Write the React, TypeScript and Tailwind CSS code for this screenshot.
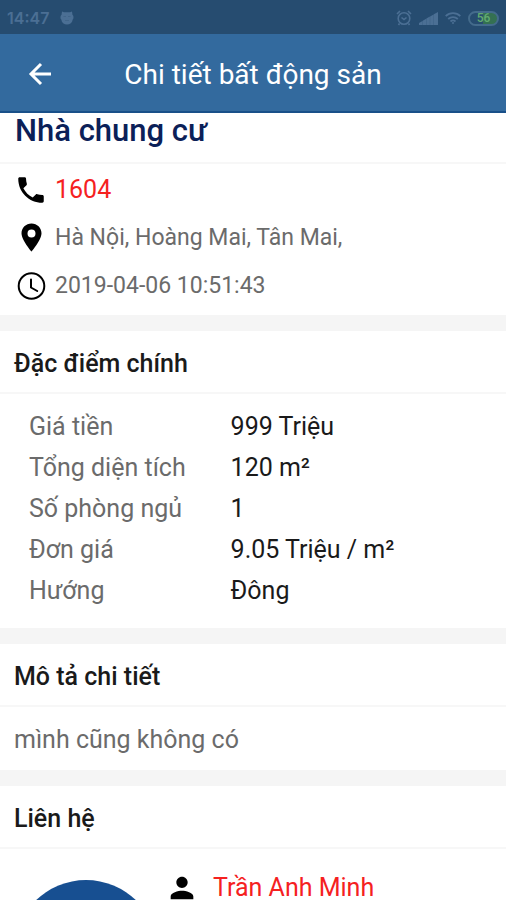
import {ReactNode} from 'react';
import {MdPerson, MdPhone} from 'react-icons/md';


const features = [
    {label: 'Giá tiền', value: '999 Triệu'},
    {label: 'Tổng diện tích', value: '120 m²'},
    {label: 'Số phòng ngủ', value: '1'},
    {label: 'Đơn giá', value: '9.05 Triệu / m²'},
    {label: 'Hướng', value: 'Đông'},
];

export default function App() {
    return (
        <div className="flex h-screen flex-col overflow-hidden bg-white font-['Roboto',sans-serif] text-black">
            <StatusBar />
            <Header />
            <main className="min-h-0 flex-1 overflow-y-auto [scrollbar-width:none]">
                <h2 className="border-b-2 border-[#f7f7f7] px-[15px] pb-[13px] text-[31px] leading-[36px] font-medium text-[#0b2058]">
                    Nhà chung cư
                </h2>
                <div className="px-[14px] pt-0.5 pb-[5px] text-[23px] text-[#6b6b6b]">
                    <InfoRow icon={<MdPhone className="size-[34px]" />}>
                        <a href="tel:1604" className="text-[25px] text-[#f5211f]">1604</a>
                    </InfoRow>
                    <InfoRow icon={<PinIcon />}>
                        Hà Nội, Hoàng Mai, Tân Mai,
                    </InfoRow>
                    <InfoRow icon={<ClockIcon />}>
                        2019-04-06 10:51:43
                    </InfoRow>
                </div>

                <Section title="Đặc điểm chính">
                    <dl className="grid grid-cols-[9fr_11fr] px-[29px] pt-3 pb-[17px] text-[25px] leading-[41px]">
                        {features.map(({label, value}) => (
                            <div className="contents" key={label}>
                                <dt className="text-[#6b6b6b]">{label}</dt>
                                <dd className="text-[#1a1a1a]">{value}</dd>
                            </div>
                        ))}
                    </dl>
                </Section>

                <Section title="Mô tả chi tiết">
                    <p className="px-[14px] pt-[18px] pb-[15px] text-[25px] leading-[30px] text-[#6b6b6b]">
                        mình cũng không có
                    </p>
                </Section>

                <Section title="Liên hệ">
                    <div className="flex px-[14px] pt-[31px] pb-8">
                        <div className="size-36 shrink-0 rounded-full bg-[#174f91]" />
                        <div className="-mt-[9px] ml-[7px] flex h-[34px] items-center gap-[14px]">
                            <MdPerson className="size-[34px]" />
                            <a href="#" className="text-[25px] leading-6 text-[#f5211f]">Trần Anh Minh</a>
                        </div>
                    </div>
                </Section>
            </main>
        </div>
    )
}

function Header() {
    return (
        <header className="flex h-[79px] shrink-0 items-center border-b-2 border-[#195089] bg-[#336a9e] px-6 pt-1 text-white">
            <button type="button" aria-label="Back" className="cursor-pointer">
                <svg viewBox="0 0 32 32" className="size-8" fill="none" stroke="currentColor" strokeWidth="3">
                    <path d="M27 15H7M17 5 7 15l10 10" />
                </svg>
            </button>
            <h1 className="flex-1 pr-8 text-center text-[28px]">Chi tiết bất động sản</h1>
        </header>
    )
}

function StatusBar() {
    return (
        <div className="flex h-[34px] shrink-0 items-center gap-[11px] bg-[#264c70] px-[7px] pt-0.5 text-[#4b6f94]">
            <span className="font-['Inter',sans-serif] text-[16px] font-semibold">14:47</span>
            <svg viewBox="0 0 14 14" className="size-3.5" fill="currentColor">
                <path d="M2 .5 4 1.200h6L12 .5l.5 3.500c1.300.3 1.300 4 .2 4.500C12.300 11.800 10 13.500 7 13.500S1.700 11.800 1.300 8.500C.2 8 .2 4.300 1.500 4z" />
                <path d="M3.500 5.500h2.500M8 5.500h2.500M5 9.500h4" stroke="#416589" strokeWidth="1" />
            </svg>
            <div className="ml-auto flex items-center gap-[7px]">
                <svg viewBox="0 0 16 16" className="size-4" fill="none" stroke="currentColor" strokeWidth="1.600">
                    <circle cx="8" cy="8.500" r="5.800" />
                    <path d="M5.500 7.500 8 9.500l2.500-2M1 4l3-3M15 4l-3-3M3.500 13.500 2.500 15M12.500 13.500l1 1.500" />
                </svg>
                <svg viewBox="0 0 19 13" className="h-[13px] w-[19px]" fill="currentColor">
                    <path d="M0 13v-2l3.500-2V13zM3.700 13V8.800l3.500-2V13zM7.400 13V6.600l3.500-2V13zM11.100 13V4.400l3.500-2V13zM14.800 13V2.200L19 0v13z" />
                </svg>
                <svg viewBox="0 0 16 14" className="h-3.5 w-4" fill="none" stroke="currentColor" strokeWidth="1.800">
                    <path d="M.7 5.200c4-4 10.600-4 14.600 0M3.200 8c2.700-2.600 6.900-2.600 9.600 0M5.500 10.500c1.500-1.400 3.500-1.400 5 0" />
                    <circle cx="8" cy="12" r="1" fill="currentColor" stroke="none" />
                </svg>
                <div className="flex h-[15px] w-[31px] items-center justify-center rounded-full border-2 border-[#446b8c] bg-linear-to-r from-transparent from-50% to-[#347052] to-50% text-[12px] leading-none font-medium text-[#62ab70]">
                    56
                </div>
            </div>
        </div>
    )
}

function InfoRow(props: {icon: ReactNode, children: ReactNode}) {
    return (
        <div className="flex h-12 items-center gap-[7px]">
            <span className="text-black">{props.icon}</span>
            {props.children}
        </div>
    )
}

function Section(props: {title: string, children: ReactNode}) {
    return (
        <section className="border-t-[16px] border-[#f5f5f5]">
            <h3 className="border-b-2 border-[#f7f7f7] px-[14px] pt-[18px] pb-[13px] text-[25px] leading-[30px] font-medium text-[#1a1a1a]">
                {props.title}
            </h3>
            {props.children}
        </section>
    )
}

function PinIcon() {
    return (
        <svg viewBox="0 0 34 34" className="size-[34px]" fill="currentColor" fillRule="evenodd">
            <path d="M17.500 2.500c-5.600 0-10 4.300-10 9.700 0 7 10 18.300 10 18.300s10-11.300 10-18.300c0-5.400-4.400-9.700-10-9.700zm0 6a4 4 0 1 1 0 8 4 4 0 0 1 0-8z" />
        </svg>
    )
}

function ClockIcon() {
    return (
        <svg viewBox="0 0 34 34" className="size-[34px]" fill="none" stroke="currentColor" strokeWidth="2" strokeLinecap="round">
            <circle cx="17.500" cy="17" r="12.800" />
            <path d="M17 10.500v8l6.200 3.500" />
        </svg>
    )
}
